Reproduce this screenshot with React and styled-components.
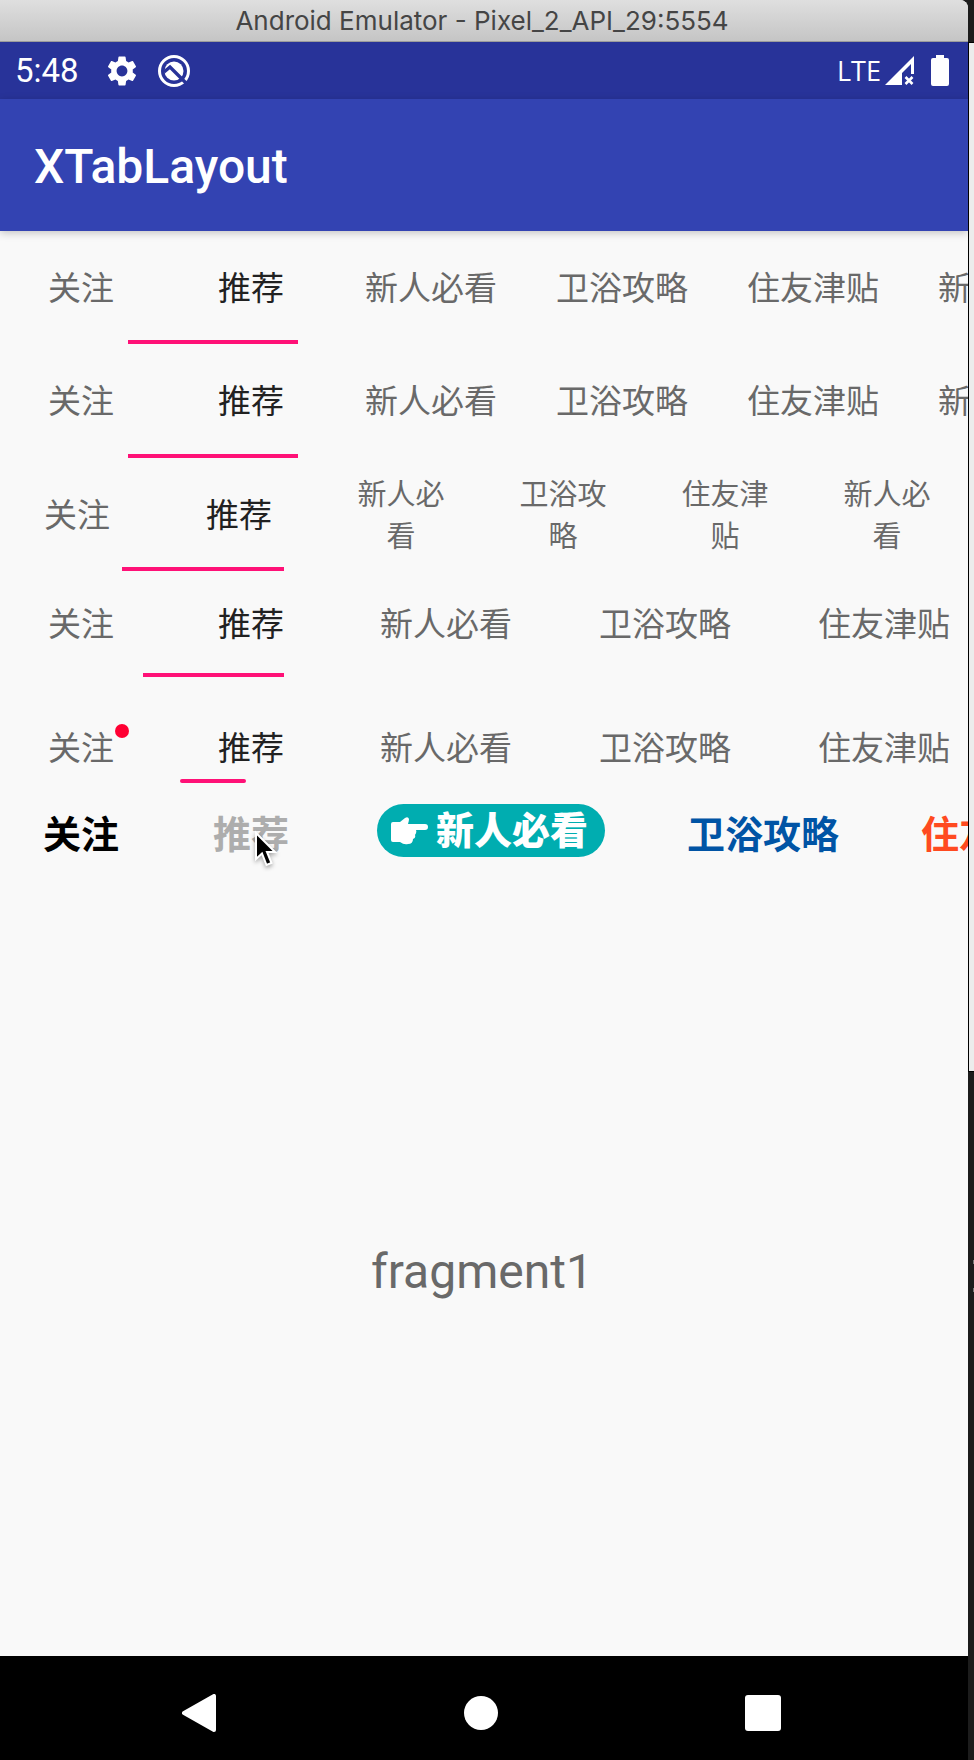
import React, { useState } from "react";
import styled, { createGlobalStyle } from "styled-components";
import { MdSettings } from "react-icons/md";

const GlobalStyle = createGlobalStyle`
  * { box-sizing: border-box; }
  body {
    margin: 0;
    background: #1c1c1c;
    font-family: Roboto, "Noto Sans CJK SC", sans-serif;
  }
  button { font-family: inherit; }
`;

const Desktop = styled.div`
  display: flex;
  min-height: 100vh;
`;

const Emulator = styled.main`
  position: relative;
  display: flex;
  flex: 1;
  flex-direction: column;
  min-width: 0;
  background: #f9f9f9;
  border-radius: 0 8px 0 0;
  overflow: hidden;
`;

const TitleBar = styled.header`
  height: 42px;
  padding-right: 4px;
  border-bottom: 1px solid #9c9c9c;
  background: linear-gradient(#dfdfdf, #c5c5c5);
  color: #454545;
  font: 26px/41px Inter, sans-serif;
  text-align: center;
  white-space: nowrap;
`;

const StatusBar = styled.div`
  display: flex;
  align-items: center;
  justify-content: space-between;
  height: 57px;
  padding: 0 19px 0 15px;
  background: #283399;
  color: #fff;
`;

const StatusGroup = styled.div`
  display: flex;
  align-items: center;
  gap: ${(p) => p.$gap}px;
`;

const Clock = styled.span`
  margin-right: 8px;
  font-size: 33px;
  line-height: 40px;
`;

const Signal = styled.span`
  display: flex;
  align-items: center;
  gap: 4px;
  font: 27px/40px "Open Sans", sans-serif;
`;

const AppBar = styled.div`
  position: relative;
  display: flex;
  align-items: center;
  height: 132px;
  padding: 4px 34px 0;
  background: #3343b2;
  box-shadow: 0 2px 8px rgba(0, 0, 0, 0.22);
  color: #fff;
`;

const AppTitle = styled.h1`
  margin: 0;
  font-size: 48px;
  font-weight: 500;
  line-height: 56px;
`;

const TabStrip = styled.div`
  position: relative;
  display: flex;
  height: ${(p) => p.$height}px;
  margin: ${(p) => p.$top || 0}px 0 0 -4px;
`;

const Tab = styled.button`
  display: flex;
  flex: ${(p) => (p.$fixed ? "1 1 0" : "none")};
  align-items: center;
  justify-content: center;
  min-width: ${(p) => (p.$fixed ? 0 : 170)}px;
  padding: ${(p) => p.$pad};
  border: 0;
  background: none;
  color: ${(p) => p.$color || (p["aria-selected"] ? "#212121" : "#696969")};
  font-size: ${(p) => p.$size || 33}px;
  font-weight: ${(p) => p.$weight || 400};
  line-height: 42px;
  text-align: center;
  white-space: ${(p) => (p.$fixed ? "normal" : "nowrap")};
  cursor: pointer;
`;

const TabLabel = styled.span`
  position: relative;
`;

const Badge = styled.i`
  position: absolute;
  top: -4px;
  right: -15px;
  width: 14px;
  height: 14px;
  border-radius: 50%;
  background: #ff0033;
`;

const Indicator = styled.span`
  position: absolute;
  bottom: 0;
  left: ${(p) => p.$left}px;
  width: ${(p) => p.$width}px;
  height: 4px;
  border-radius: ${(p) => (p.$round ? 2 : 0)}px;
  background: #ff1177;
`;

const Pill = styled.span`
  display: flex;
  align-items: center;
  gap: 8px;
  height: 53px;
  margin-bottom: 8px;
  padding: 0 17px 0 14px;
  border-radius: 27px;
  background: #00adb0;
  color: #fff;
  font-size: 38px;
  font-weight: 900;
`;

const Page = styled.section`
  display: flex;
  flex: 1;
  align-items: center;
  justify-content: center;
  padding: 2px 4px 0 0;
  color: #696969;
  font-size: 48px;
  line-height: 56px;
`;

const NavBar = styled.nav`
  display: flex;
  height: 104px;
  padding: 10px 64px 0 58px;
  background: #000;
`;

const NavButton = styled.button`
  display: flex;
  flex: 1;
  align-items: center;
  justify-content: center;
  padding: 0;
  border: 0;
  background: none;
  cursor: pointer;
`;

const Cursor = styled.svg`
  position: absolute;
  top: 829px;
  left: 252px;
  filter: drop-shadow(0 2px 2px rgba(0, 0, 0, 0.35));
`;

const Backdrop = styled.aside`
  display: flex;
  flex: 0 0 6px;
  flex-direction: column;
  align-items: flex-end;
  padding-top: 42px;
`;

const BackWindow = styled.div`
  align-self: stretch;
  height: 1030px;
  border: 1px solid #000;
  border-right: 0;
  background: #ececec;
`;

const BackMark = styled.span`
  width: 1px;
  height: 4px;
  margin-top: ${(p) => p.$top}px;
  background: #777;
`;

const LABELS = ["关注", "推荐", "新人必看", "卫浴攻略", "住友津贴", "新人必看"];

const ROWS = [
  { height: 113, pad: "2px 30px 0 29px", indicator: [132, 170] },
  { height: 114, pad: "2px 30px 0 29px", indicator: [132, 170] },
  { height: 113, fixed: true, pad: "2px 36px 0", indicator: [126, 162] },
  { height: 106, pad: "2px 43px 0 44px", indicator: [147, 141] },
  { height: 70, top: 36, pad: "2px 43px 0 44px", indicator: [184, 66], round: true, badge: true },
];

function TabRow({ row, index }) {
  const [active, setActive] = useState(1);
  return (
    <TabStrip role="tablist" aria-label={`Tabs ${index + 1}`} $height={row.height} $top={row.top}>
      {LABELS.map((label, i) => {
        const short = label.length === 2;
        return (
          <Tab
            key={i}
            type="button"
            role="tab"
            aria-selected={i === active}
            onClick={() => setActive(i)}
            $fixed={row.fixed}
            $pad={short && !row.fixed ? "2px 0 0" : row.pad}
            $size={row.fixed && !short ? 29 : 33}
          >
            <TabLabel>
              {label}
              {row.badge && i === 0 && <Badge />}
            </TabLabel>
          </Tab>
        );
      })}
      <Indicator $left={row.indicator[0]} $width={row.indicator[1]} $round={row.round} />
    </TabStrip>
  );
}

const STYLED_TABS = [
  { label: "关注", color: "#000000" },
  { label: "推荐", color: "#adadad" },
  { label: "新人必看", pill: true },
  { label: "卫浴攻略", color: "#0054a5" },
  { label: "住友津贴", color: "#ff4a20" },
];

function HandIcon() {
  return (
    <svg width="37" height="28" viewBox="0 0 37 28" fill="#fff" aria-hidden="true">
      <path d="M0 7 Q0 5 2 5 H9 L14 1 Q17 -1 18 2 Q18 4 17 7 H34 Q37 7 37 10 Q37 13 34 13 H25 Q26 15 24 18 Q25 21 22 22 Q22 27 17 27 Q13 28 9 25 H2 Q0 25 0 23 Z" />
    </svg>
  );
}

function StyledTabRow() {
  const [active, setActive] = useState(1);
  return (
    <TabStrip role="tablist" aria-label="Custom tabs" $height={103}>
      {STYLED_TABS.map((tab, i) => (
        <Tab
          key={tab.label}
          type="button"
          role="tab"
          aria-selected={i === active}
          onClick={() => setActive(i)}
          $pad={tab.label.length === 2 ? "0" : "0 41px"}
          $color={tab.color}
          $size={38}
          $weight={700}
        >
          {tab.pill ? (
            <Pill>
              <HandIcon />
              {tab.label}
            </Pill>
          ) : (
            tab.label
          )}
        </Tab>
      ))}
    </TabStrip>
  );
}

function BetaIcon() {
  return (
    <svg width="34" height="34" viewBox="0 0 34 34" fill="none" aria-hidden="true">
      <circle cx="17" cy="17" r="14.5" stroke="#fff" strokeWidth="3" />
      <circle cx="17" cy="17" r="9.5" fill="#fff" />
      <path d="M7 18 L13 13 L30 30" stroke="#283399" strokeWidth="3.4" />
    </svg>
  );
}

function SignalIcon() {
  return (
    <svg width="30" height="30" viewBox="0 0 30 30" aria-hidden="true">
      <path fill="#fff" fillRule="evenodd" d="M0 29 L29 0 V18 H26 V8 L17 17 V29 Z" />
      <path d="M20.5 21 L27.5 28 M27.5 21 L20.5 28" stroke="#fff" strokeWidth="2.6" />
    </svg>
  );
}

function BatteryIcon() {
  return (
    <svg width="18" height="31" viewBox="0 0 18 31" aria-hidden="true">
      <path fill="#fff" d="M5 0 H13 V3 H16 Q18 3 18 5 V29 Q18 31 16 31 H2 Q0 31 0 29 V5 Q0 3 2 3 H5 Z" />
    </svg>
  );
}

export default function App() {
  return (
    <>
      <GlobalStyle />
      <Desktop>
        <Emulator>
          <TitleBar>Android Emulator - Pixel_2_API_29:5554</TitleBar>
          <StatusBar>
            <StatusGroup $gap={17}>
              <Clock>5:48</Clock>
              <MdSettings size={36} aria-hidden="true" />
              <BetaIcon />
            </StatusGroup>
            <StatusGroup $gap={16}>
              <Signal>
                LTE
                <SignalIcon />
              </Signal>
              <BatteryIcon />
            </StatusGroup>
          </StatusBar>
          <AppBar>
            <AppTitle>XTabLayout</AppTitle>
          </AppBar>
          {ROWS.map((row, i) => (
            <TabRow key={i} row={row} index={i} />
          ))}
          <StyledTabRow />
          <Page>fragment1</Page>
          <NavBar>
            <NavButton type="button" aria-label="Back">
              <svg width="34" height="38" viewBox="0 0 34 38">
                <path d="M2 19 L32 2 V36 Z" fill="#fff" stroke="#fff" strokeWidth="4" strokeLinejoin="round" />
              </svg>
            </NavButton>
            <NavButton type="button" aria-label="Home">
              <svg width="34" height="34" viewBox="0 0 34 34">
                <circle cx="17" cy="17" r="17" fill="#fff" />
              </svg>
            </NavButton>
            <NavButton type="button" aria-label="Recent apps">
              <svg width="36" height="36" viewBox="0 0 36 36">
                <rect width="36" height="36" rx="3" fill="#fff" />
              </svg>
            </NavButton>
          </NavBar>
          <Cursor width="28" height="40" viewBox="0 0 28 40" aria-hidden="true">
            <path
              d="M4 4 V30 L10 24.5 L14.5 36 L19.5 34 L15 23 H23 Z"
              fill="#000"
              stroke="#fff"
              strokeWidth="2"
            />
          </Cursor>
        </Emulator>
        <Backdrop>
          <BackWindow />
          <BackMark $top={188} />
          <BackMark $top={24} />
        </Backdrop>
      </Desktop>
    </>
  );
}
